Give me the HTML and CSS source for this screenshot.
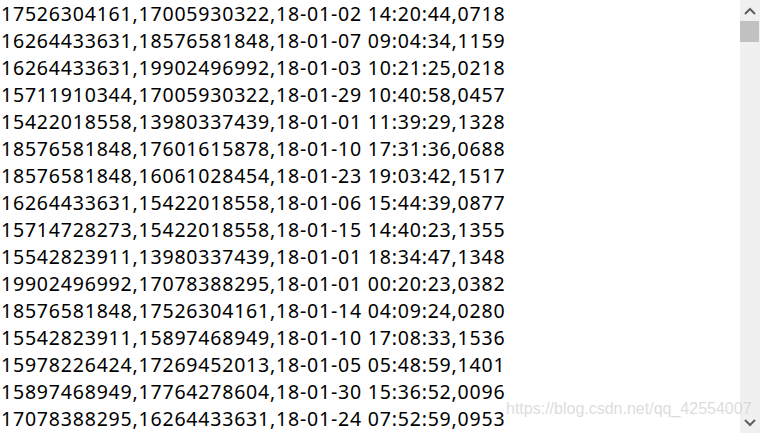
FILE: index.html
```html
<!DOCTYPE html>
<html>
<head>
<meta charset="utf-8">
<link rel="stylesheet" href="styles.css">
</head>
<body>
<div class="window">
  <div class="content">
    <div class="line">17526304161,17005930322,18-01-02 14:20:44,0718</div>
    <div class="line">16264433631,18576581848,18-01-07 09:04:34,1159</div>
    <div class="line">16264433631,19902496992,18-01-03 10:21:25,0218</div>
    <div class="line">15711910344,17005930322,18-01-29 10:40:58,0457</div>
    <div class="line">15422018558,13980337439,18-01-01 11:39:29,1328</div>
    <div class="line">18576581848,17601615878,18-01-10 17:31:36,0688</div>
    <div class="line">18576581848,16061028454,18-01-23 19:03:42,1517</div>
    <div class="line">16264433631,15422018558,18-01-06 15:44:39,0877</div>
    <div class="line">15714728273,15422018558,18-01-15 14:40:23,1355</div>
    <div class="line">15542823911,13980337439,18-01-01 18:34:47,1348</div>
    <div class="line">19902496992,17078388295,18-01-01 00:20:23,0382</div>
    <div class="line">18576581848,17526304161,18-01-14 04:09:24,0280</div>
    <div class="line">15542823911,15897468949,18-01-10 17:08:33,1536</div>
    <div class="line">15978226424,17269452013,18-01-05 05:48:59,1401</div>
    <div class="line">15897468949,17764278604,18-01-30 15:36:52,0096</div>
    <div class="line">17078388295,16264433631,18-01-24 07:52:59,0953</div>
  </div>
  <div class="scrollbar">
    <div class="arrow">
      <svg width="12" height="8" viewBox="0 0 12 8"><path d="M1 7 L6 2 L11 7" fill="none" stroke="#606060" stroke-width="2"/></svg>
    </div>
    <div class="thumb"></div>
    <div class="track"></div>
    <div class="arrow">
      <svg width="12" height="8" viewBox="0 0 12 8"><path d="M1 1 L6 6 L11 1" fill="none" stroke="#606060" stroke-width="2"/></svg>
    </div>
  </div>
  <div class="watermark">https://blog.csdn.net/qq_42554007</div>
</div>
</body>
</html>
```
FILE: styles.css
```css
html, body {
  margin: 0;
  padding: 0;
  background: #ffffff;
}
.window {
  position: relative;
  width: 760px;
  height: 433px;
  display: flex;
  overflow: hidden;
}
.content {
  flex: 1;
  padding: 0 0 0 1px;
  font-family: "Noto Sans", "Open Sans", sans-serif;
  font-size: 19.5px;
  letter-spacing: 0.8px;
  color: #000;
}
.line {
  height: 27px;
  line-height: 27px;
  white-space: nowrap;
}
.scrollbar {
  width: 20px;
  background: #f0f0f0;
  display: flex;
  flex-direction: column;
}
.arrow {
  height: 21px;
  display: flex;
  align-items: center;
  justify-content: center;
}
.thumb {
  height: 21px;
  margin-right: 1px;
  background: #c1c1c1;
}
.track {
  flex: 1;
}
.watermark {
  position: absolute;
  left: 506px;
  top: 400px;
  font-family: "Liberation Sans", Arial, sans-serif;
  font-size: 16px;
  color: rgba(205, 205, 205, 0.7);
  white-space: nowrap;
}
```
